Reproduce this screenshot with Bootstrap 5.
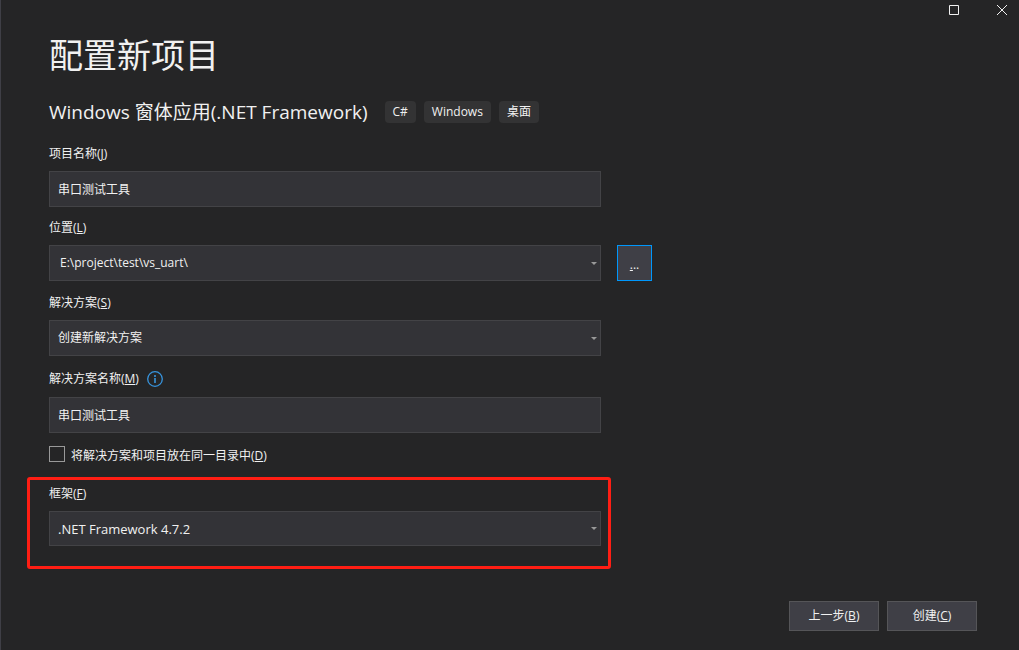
<!DOCTYPE html>
<html lang="zh-CN">
<head>
<meta charset="utf-8">
<meta name="viewport" content="width=device-width, initial-scale=1">
<title>配置新项目</title>
<link href="https://cdn.jsdelivr.net/npm/bootstrap@5.3.0/dist/css/bootstrap.min.css" rel="stylesheet">
<style>
  body {
    background: #252526;
    color: #f1f1f1;
    border-left: 1px solid #3f3f46;
    font-family: "Open Sans", "Noto Sans CJK SC", sans-serif;
    font-size: 12px;
    line-height: 20px;
  }
  .titlebar { height: 20px; padding-right: 12px; gap: 38px; }
  .win-btn { width: 10px; height: 20px; color: #f1f1f1; }
  .win-btn svg { display: block; }
  .page { padding: 11px 42px 19px 48px; }
  .page-title { font-size: 34px; line-height: 48px; margin-bottom: 21px; }
  .template-row { gap: 17px; margin-bottom: 20px; }
  .template-name { font-size: 19px; line-height: 24px; }
  .tag { background: #333334; border-radius: 4px; line-height: 22px; padding: 0 8px; }
  .fields { max-width: 552px; }
  .group { margin-bottom: 12px; }
  .group-tight { margin-bottom: 11px; }
  .caption { display: block; margin-bottom: 7px; }
  .caption-row { height: 22px; gap: 8px; margin-bottom: 7px; }
  .field, .field:focus {
    height: 36px;
    padding: 0 24px 0 8px;
    color: #f1f1f1;
    background-color: #333337;
    border: 1px solid #434346;
    border-radius: 0;
    font-family: "Open Sans", "Noto Sans CJK SC", sans-serif;
    font-size: 12px;
    line-height: 20px;
    box-shadow: none;
  }
  .field.field-path { padding-left: 10px; }
  select.field {
    background-image: url("data:image/svg+xml,%3Csvg xmlns='http://www.w3.org/2000/svg' viewBox='0 0 6 3'%3E%3Cpath fill='%23999999' d='M0 0h6L3 3z'/%3E%3C/svg%3E");
    background-size: 6px 3px;
    background-position: right 3px center;
  }
  .browse { left: 100%; top: 0; margin-left: 16px; width: 35px; height: 36px; }
  .vs-btn {
    background: #3f3f46;
    color: #f1f1f1;
    border: 1px solid #555558;
    border-radius: 0;
    font-size: 12px;
    line-height: 20px;
    padding: 4px 0;
    transition: none;
  }
  .vs-btn:hover { background: #4a4a52; color: #ffffff; border-color: #0097fb; }
  .vs-btn.active-edge { border-color: #0097fb; padding-top: 8px; }
  .wide { width: 90px; }
  .check-row { gap: 6px; }
  .check, .check:focus {
    width: 16px; height: 16px; margin: 0 0 4px;
    background-color: #252526;
    border: 1px solid #999999;
    border-radius: 0 !important;
    box-shadow: none;
  }
  .check-row label { padding-top: 1px; }
  .framed {
    margin: 11px -10px 0 -22px;
    padding: 4px 7px 20px 19px;
    border: 3px solid #ff1e14;
    border-radius: 3px;
  }
  .framed .field { height: 35px; }
  .field.field-latin { font-size: 13px; font-family: "Open Sans", sans-serif; }
</style>
</head>
<body class="d-flex flex-column min-vh-100">
  <header class="titlebar d-flex justify-content-end">
    <button type="button" class="win-btn btn p-0 border-0" aria-label="最大化">
      <svg width="10" height="20" viewBox="0 0 10 20"><path d="M.5 5.500h9v9h-9z" fill="none" stroke="currentColor"/></svg>
    </button>
    <button type="button" class="win-btn btn p-0 border-0" aria-label="关闭">
      <svg width="10" height="20" viewBox="0 0 10 20"><path d="M0 5l10 10M10 5L0 15" fill="none" stroke="currentColor"/></svg>
    </button>
  </header>

  <form class="page d-flex flex-column flex-grow-1">
    <h1 class="page-title fw-normal">配置新项目</h1>
    <div class="template-row d-flex align-items-center flex-wrap">
      <h2 class="template-name fw-normal m-0">Windows 窗体应用(.NET Framework)</h2>
      <div class="d-flex gap-2">
        <span class="tag">C#</span>
        <span class="tag">Windows</span>
        <span class="tag">桌面</span>
      </div>
    </div>

    <div class="fields">
      <div class="group-tight">
        <label class="caption" for="project">项目名称(<u>J</u>)</label>
        <input id="project" type="text" class="form-control field" value="串口测试工具">
      </div>

      <div class="group">
        <label class="caption" for="location">位置(<u>L</u>)</label>
        <div class="position-relative">
          <select id="location" class="form-select field field-path">
            <option>E:\project\test\vs_uart\</option>
          </select>
          <button type="button" class="browse btn vs-btn active-edge position-absolute" aria-label="浏览"><u>.</u>..</button>
        </div>
      </div>

      <div class="group">
        <label class="caption" for="solution">解决方案(<u>S</u>)</label>
        <select id="solution" class="form-select field">
          <option>创建新解决方案</option>
        </select>
      </div>

      <div class="group">
        <div class="caption-row d-flex align-items-center">
          <label for="solution-name">解决方案名称(<u>M</u>)</label>
          <svg width="16" height="16" viewBox="0 0 16 16" fill="none" stroke="#3794dd" aria-hidden="true">
            <circle cx="8" cy="8" r="7.300" stroke-width="1.300"/>
            <path d="M8 4v2M8 7v5" stroke-width="1.600"/>
          </svg>
        </div>
        <input id="solution-name" type="text" class="form-control field" value="串口测试工具">
      </div>

      <div class="check-row d-flex align-items-center">
        <input id="same-dir" type="checkbox" class="form-check-input check">
        <label for="same-dir">将解决方案和项目放在同一目录中(<u>D</u>)</label>
      </div>

      <div class="framed">
        <label class="caption" for="framework">框架(<u>F</u>)</label>
        <select id="framework" class="form-select field field-latin">
          <option>.NET Framework 4.7.2</option>
        </select>
      </div>
    </div>

    <div class="d-flex justify-content-end gap-2 mt-auto">
      <button type="button" class="btn vs-btn wide">上一步(<u>B</u>)</button>
      <button type="submit" class="btn vs-btn wide">创建(<u>C</u>)</button>
    </div>
  </form>
<script src="https://cdn.jsdelivr.net/npm/bootstrap@5.3.0/dist/js/bootstrap.bundle.min.js"></script>
</body>
</html>
